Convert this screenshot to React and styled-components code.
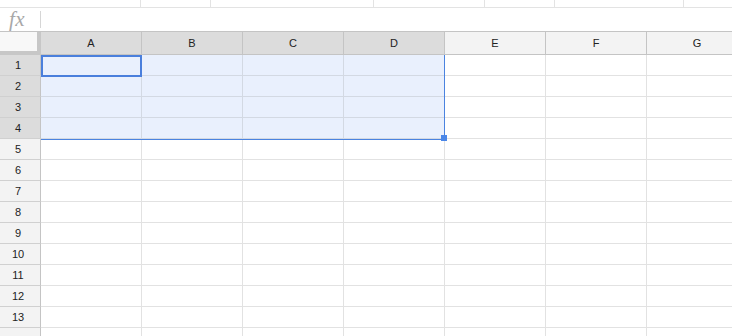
import React from "react";
import styled, { createGlobalStyle } from "styled-components";

const GlobalStyle = createGlobalStyle`
  html, body { margin: 0; padding: 0; background: #ffffff; }
  body { font-family: "Liberation Sans", Arial, sans-serif; overflow: hidden; }
  * { box-sizing: border-box; }
`;

const Page = styled.div`
  width: 732px;
  height: 336px;
  overflow: hidden;
  display: flex;
  flex-direction: column;
  background: #fff;
`;

const TopStrip = styled.div`
  display: flex;
  height: 8px;
  flex: none;
  border-bottom: 1px solid #e3e3e3;
`;

const StripSeg = styled.div`
  flex: ${(p) => (p.$w ? `0 0 ${p.$w}px` : "1 1 auto")};
  border-right: ${(p) => (p.$w ? "1px solid #e3e3e3" : "none")};
  height: 100%;
`;

const FormulaBar = styled.div`
  display: flex;
  align-items: center;
  height: 24px;
  flex: none;
  border-bottom: 1px solid #c4c4c4;
`;

const FxLabel = styled.div`
  width: 40px;
  padding-left: 9px;
  font-family: "Liberation Serif", "Times New Roman", serif;
  font-style: italic;
  font-size: 21px;
  color: #a8a8a8;
  line-height: 21px;
  letter-spacing: 0.5px;
`;

const FxDivider = styled.div`
  width: 1px;
  height: 17px;
  background: #d6d6d6;
`;

const GridWrap = styled.div`
  position: relative;
  flex: none;
`;

const Grid = styled.div`
  display: grid;
  grid-template-columns: 41px repeat(7, 101px);
  grid-template-rows: 23px;
  grid-auto-rows: 21px;
  width: 748px;
`;

const Corner = styled.div`
  background: #f8f8f8;
  border-right: 4px solid #c7c7c7;
  border-bottom: 4px solid #c7c7c7;
`;

const ColHead = styled.div`
  display: flex;
  align-items: center;
  justify-content: center;
  font-size: 11px;
  color: #222;
  background: ${(p) => (p.$sel ? "#dcdcdc" : "#f3f3f3")};
  border-right: 1px solid #c4c4c4;
  border-bottom: 1px solid #c4c4c4;
`;

const RowHead = styled.div`
  display: flex;
  align-items: center;
  justify-content: center;
  padding-right: 4px;
  font-size: 11px;
  color: #222;
  background: ${(p) => (p.$sel ? "#dcdcdc" : "#f3f3f3")};
  border-right: 1px solid #c4c4c4;
  border-bottom: 1px solid #d0d0d0;
`;

const Cell = styled.div`
  background: ${(p) => (p.$sel ? "#e9f0fd" : "#ffffff")};
  border-right: 1px solid ${(p) => (p.$sel ? "#d3d9e3" : "#e2e2e2")};
  border-bottom: 1px solid ${(p) => (p.$sel ? "#d3d9e3" : "#e2e2e2")};
`;

const RangeBox = styled.div`
  position: absolute;
  left: 41px;
  top: 23px;
  width: 404px;
  height: 85px;
  border-right: 1px solid #4a83e0;
  border-bottom: 1px solid #4a83e0;
  pointer-events: none;
`;

const ActiveCell = styled.div`
  position: absolute;
  left: 41px;
  top: 23px;
  width: 101px;
  height: 22px;
  border: 2px solid #4a7fdc;
  pointer-events: none;
`;

const Handle = styled.div`
  position: absolute;
  left: 441px;
  top: 103px;
  width: 6px;
  height: 6px;
  background: #4a86e8;
`;

const cols = ["A", "B", "C", "D", "E", "F", "G"];
const rows = Array.from({ length: 14 }, (_, i) => i + 1);
const strip = [141, 70, 163, 111, 70, 129];

export default function App() {
  return (
    <>
      <GlobalStyle />
      <Page>
        <TopStrip>
          {strip.map((w, i) => (
            <StripSeg key={i} $w={w} />
          ))}
          <StripSeg />
        </TopStrip>
        <FormulaBar>
          <FxLabel>fx</FxLabel>
          <FxDivider />
        </FormulaBar>
        <GridWrap>
          <Grid>
            <Corner />
            {cols.map((c, ci) => (
              <ColHead key={c} $sel={ci < 4}>
                {c}
              </ColHead>
            ))}
            {rows.map((r) => (
              <React.Fragment key={r}>
                <RowHead $sel={r <= 4}>{r <= 13 ? r : ""}</RowHead>
                {cols.map((c, ci) => (
                  <Cell key={c} $sel={r <= 4 && ci < 4} />
                ))}
              </React.Fragment>
            ))}
          </Grid>
          <RangeBox />
          <ActiveCell />
          <Handle />
        </GridWrap>
      </Page>
    </>
  );
}
